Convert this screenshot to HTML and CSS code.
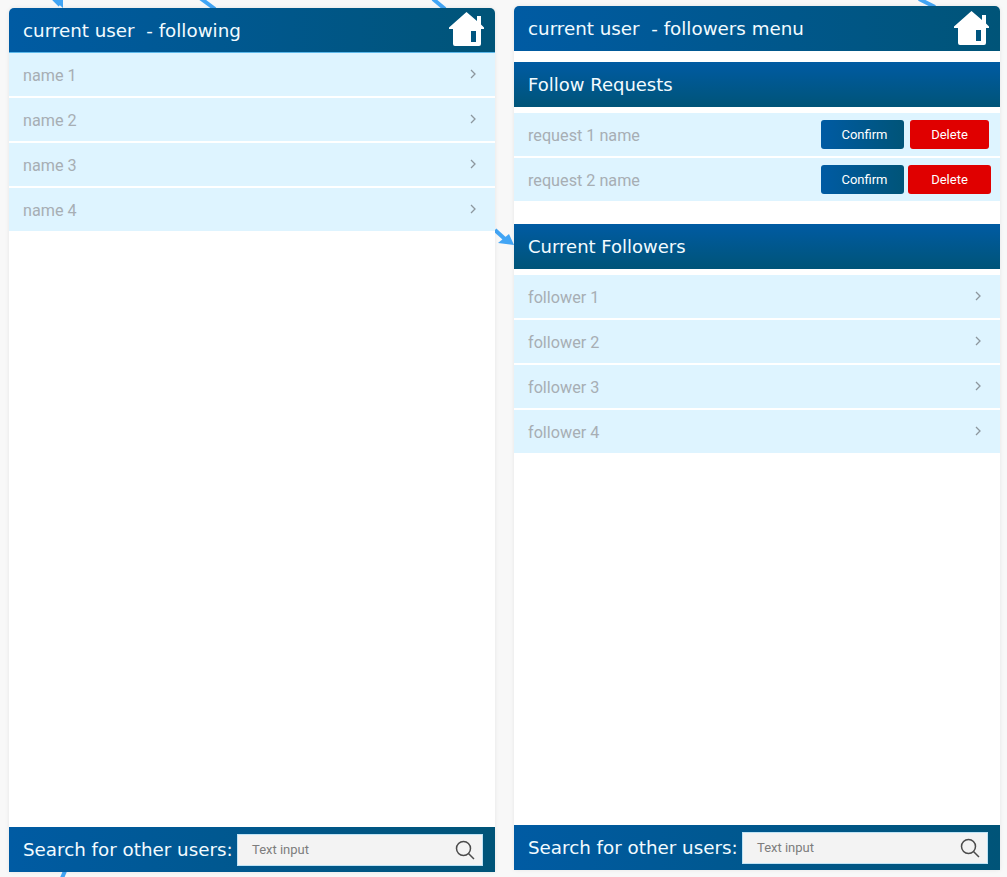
FILE: index.html
```html
<!DOCTYPE html>
<html lang="en">
<head>
<meta charset="utf-8">
<title>Following and followers</title>
<link rel="stylesheet" href="styles.css">
</head>
<body>
<svg class="wires" width="1007" height="877" viewBox="0 0 1007 877" aria-hidden="true">
  <g stroke="#42a5f5" stroke-width="4" fill="none">
    <path d="M53 -2L60 5"/>
    <path d="M200 -2L215 9"/>
    <path d="M433 -1L445 9"/>
    <path d="M919 -1L935 7"/>
    <path d="M495 230L506 240"/>
    <path d="M65 871L62 878"/>
  </g>
  <path d="M54 0H63V8Z" fill="#42a5f5"/>
  <path d="M514 245L498 243L509 234Z" fill="#42a5f5"/>
</svg>

<section class="phone phone-left">
  <header class="top">
    <h1 class="title">current user&nbsp; - following</h1>
    <svg class="home" viewBox="0 0 36 36"><path d="M17.500 1L28 10V5H32V13.500L35 16.500V18H32V33Q32 35 30 35H6Q4 35 4 33V18H0V16.500Z" fill="#fff"/><rect x="22" y="20" width="5" height="11" fill="#00557f"/></svg>
  </header>
  <div class="rows rows-first">
    <div class="row"><span>name 1</span><svg class="chev" viewBox="0 0 8 10"><path d="M2 1L6 5L2 9"/></svg></div>
    <div class="row"><span>name 2</span><svg class="chev" viewBox="0 0 8 10"><path d="M2 1L6 5L2 9"/></svg></div>
    <div class="row"><span>name 3</span><svg class="chev" viewBox="0 0 8 10"><path d="M2 1L6 5L2 9"/></svg></div>
    <div class="row"><span>name 4</span><svg class="chev" viewBox="0 0 8 10"><path d="M2 1L6 5L2 9"/></svg></div>
  </div>
  <footer class="bottom">
    <label class="search-label">Search for other users:</label>
    <div class="input"><span>Text input</span><svg class="lens" viewBox="0 0 20 20"><circle cx="8.500" cy="8.500" r="7"/><path d="M13.500 13.500L19 19"/></svg></div>
  </footer>
</section>

<section class="phone phone-right">
  <header class="top top-plain">
    <h1 class="title">current user&nbsp; - followers menu</h1>
    <svg class="home" viewBox="0 0 36 36"><path d="M17.500 1L28 10V5H32V13.500L35 16.500V18H32V33Q32 35 30 35H6Q4 35 4 33V18H0V16.500Z" fill="#fff"/><rect x="22" y="20" width="5" height="11" fill="#00557f"/></svg>
  </header>
  <h2 class="band band-first">Follow Requests</h2>
  <div class="rows">
    <div class="row"><span>request 1 name</span><div class="actions"><button class="btn confirm">Confirm</button><button class="btn delete">Delete</button></div></div>
    <div class="row"><span>request 2 name</span><div class="actions actions-tight"><button class="btn confirm">Confirm</button><button class="btn delete delete-wide">Delete</button></div></div>
  </div>
  <h2 class="band band-second">Current Followers</h2>
  <div class="rows">
    <div class="row"><span>follower 1</span><svg class="chev" viewBox="0 0 8 10"><path d="M2 1L6 5L2 9"/></svg></div>
    <div class="row"><span>follower 2</span><svg class="chev" viewBox="0 0 8 10"><path d="M2 1L6 5L2 9"/></svg></div>
    <div class="row"><span>follower 3</span><svg class="chev" viewBox="0 0 8 10"><path d="M2 1L6 5L2 9"/></svg></div>
    <div class="row"><span>follower 4</span><svg class="chev" viewBox="0 0 8 10"><path d="M2 1L6 5L2 9"/></svg></div>
  </div>
  <footer class="bottom">
    <label class="search-label">Search for other users:</label>
    <div class="input"><span>Text input</span><svg class="lens" viewBox="0 0 20 20"><circle cx="8.500" cy="8.500" r="7"/><path d="M13.500 13.500L19 19"/></svg></div>
  </footer>
</section>
</body>
</html>
```

FILE: styles.css
```css
* { box-sizing: border-box; }
html, body { margin: 0; padding: 0; }
body {
  position: relative;
  width: 1007px;
  height: 877px;
  overflow: hidden;
  background: #f8f8f8;
  font-family: "Roboto", "Liberation Sans", sans-serif;
}
.wires { position: absolute; left: 0; top: 0; }
.phone {
  position: absolute;
  width: 486px;
  height: 864px;
  display: flex;
  flex-direction: column;
  background: #fff;
  border-radius: 5px 5px 0 0;
  overflow: hidden;
  box-shadow: 0 0 4px rgba(0, 0, 0, .08);
}
.phone-left { left: 9px; top: 8px; }
.phone-right { left: 514px; top: 6px; }
.top {
  height: 45px;
  flex: none;
  display: flex;
  align-items: center;
  justify-content: space-between;
  padding: 0 10px 0 14px;
  background: linear-gradient(90deg, #005ba3, #005478);
  border-bottom: 1px solid #5cb8ea;
}
.top-plain { border-bottom: 0; }
.title, .band, .search-label {
  margin: 0;
  color: #f2fbff;
  font-family: "DejaVu Sans", "Liberation Sans", sans-serif;
  font-weight: 400;
  font-size: 18px;
  white-space: nowrap;
}
.title { font-size: 18.300px; }
.home { width: 36px; height: 36px; display: block; margin-top: -2px; }
.rows { display: flex; flex-direction: column; gap: 2px; flex: none; }
.row {
  height: 43px;
  display: flex;
  align-items: center;
  justify-content: space-between;
  padding: 2px 18px 0 14px;
  background: #def4ff;
  color: #a7aeb4;
  font-size: 16.200px;
}
.chev { width: 8px; height: 10px; fill: none; stroke: #8d979e; stroke-width: 1.300; margin-top: -3px; }
.band {
  height: 45px;
  flex: none;
  padding: 0 14px;
  display: flex;
  align-items: center;
  background: linear-gradient(180deg, #005ba3, #005478);
}
.band-first { margin: 11px 0 6px; }
.band-second { margin: 23px 0 6px; }
.actions { display: flex; gap: 6px; margin-right: -7px; margin-top: -3px; }
.actions-tight { gap: 4px; margin-right: -9px; }
.btn {
  height: 29px;
  border: 0;
  padding: 0;
  border-radius: 3px;
  color: #fff;
  font-family: "Roboto", "Liberation Sans", sans-serif;
  font-size: 13px;
  font-weight: 400;
}
.confirm { width: 83px; padding-left: 4px; background: linear-gradient(90deg, #005ba3, #005478); }
.delete { width: 79px; background: #e00000; }
.delete-wide { width: 83px; }
.bottom {
  margin-top: auto;
  height: 45px;
  flex: none;
  display: flex;
  align-items: center;
  padding: 0 12px 0 14px;
  background: linear-gradient(90deg, #005ba3, #005478);
}
.search-label { font-size: 18.300px; }
.input {
  margin-left: auto;
  width: 246px;
  height: 32px;
  display: flex;
  align-items: center;
  justify-content: space-between;
  padding: 0 7px 0 14px;
  background: #f3f3f3;
  border: 1px solid #bfe3f5;
  color: #7d7d7d;
  font-size: 13px;
}
.lens { width: 20px; height: 20px; fill: none; stroke: #4b4b4b; stroke-width: 1.500; }
```
